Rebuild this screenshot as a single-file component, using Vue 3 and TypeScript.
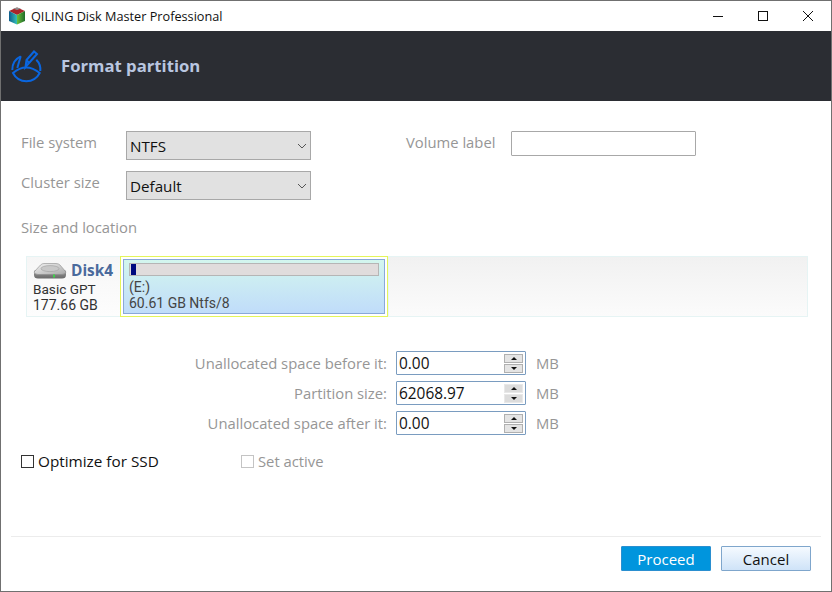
<script setup lang="ts">
interface SpinRow { label: string; value: string; active: boolean }
const spins: SpinRow[] = [
  { label: 'Unallocated space before it:', value: '0.00', active: false },
  { label: 'Partition size:', value: '62068.97', active: true },
  { label: 'Unallocated space after it:', value: '0.00', active: false },
]
</script>

<template>
  <div class="win">
    <div class="titlebar">
      <svg class="applogo" width="18" height="18" viewBox="0 0 18 18">
        <defs>
          <linearGradient id="logoL" x1="0" y1="0" x2="1" y2="0">
            <stop offset="0" stop-color="#0f5c8c" />
            <stop offset="1" stop-color="#35c0b8" />
          </linearGradient>
          <linearGradient id="logoR" x1="0" y1="0" x2="1" y2="0">
            <stop offset="0" stop-color="#6bbf3a" />
            <stop offset="1" stop-color="#1f6b2a" />
          </linearGradient>
        </defs>
        <path d="M9 0.5 17 4 9 8 1 4Z" fill="#a9252a" />
        <path d="M5 1.5 9 0.5 13 1.5 9 3Z" fill="#8f8f8f" />
        <path d="M1 4 9 8V17.5L1 14Z" fill="url(#logoL)" />
        <path d="M9 8 17 4V14L9 17.5Z" fill="url(#logoR)" />
      </svg>
      <span class="apptitle">QILING Disk Master Professional</span>
      <div class="winbtns">
        <svg width="12" height="12" viewBox="0 0 12 12"><path d="M1 6.5H11" stroke="#111" fill="none" /></svg>
        <svg width="12" height="12" viewBox="0 0 12 12"><rect x="1.5" y="1.5" width="9" height="9" stroke="#111" fill="none" /></svg>
        <svg width="12" height="12" viewBox="0 0 12 12"><path d="M1 1 11 11M11 1 1 11" stroke="#111" fill="none" /></svg>
      </div>
    </div>

    <header class="head">
      <svg class="headicon" width="36" height="36" viewBox="0 0 36 36" fill="none" stroke="#0a66e0" stroke-width="2">
        <path d="M12.7 8.3A14 14 0 0 0 4.3 22" />
        <path d="M12.7 8.3 9.3 20" />
        <path d="M28.3 11.7A14 14 0 0 1 32.3 23" />
        <path d="M5 25Q18 14 31.7 25A15 15 0 0 1 5 25Z" />
        <path d="M17.5 19 18.5 12 26 3.5 29 6 21 15Z" />
        <path d="M18.5 12 21 15" />
      </svg>
      <h1 class="headtitle">Format partition</h1>
    </header>

    <main class="body">
      <section class="formtop">
        <div class="fieldcol">
          <div class="field">
            <label class="lbl lblfixed">File system</label>
            <div class="select"><span>NTFS</span><svg width="10" height="6" viewBox="0 0 10 6"><path d="M1 1 5 5 9 1" stroke="#555" fill="none" /></svg></div>
          </div>
          <div class="field">
            <label class="lbl lblfixed">Cluster size</label>
            <div class="select"><span>Default</span><svg width="10" height="6" viewBox="0 0 10 6"><path d="M1 1 5 5 9 1" stroke="#555" fill="none" /></svg></div>
          </div>
        </div>
        <div class="volume">
          <label class="lbl vollbl">Volume label</label>
          <div class="volinput"></div>
        </div>
      </section>

      <div class="lbl sizeloc">Size and location</div>

      <section class="strip">
        <div class="diskcard">
          <div class="diskname">
            <svg width="34" height="18" viewBox="0 0 34 18">
              <defs>
                <linearGradient id="hddtop" x1="0" y1="0" x2="1" y2="1">
                  <stop offset="0" stop-color="#f4f4f4" />
                  <stop offset="1" stop-color="#a8a8a8" />
                </linearGradient>
                <linearGradient id="hddside" x1="0" y1="0" x2="0" y2="1">
                  <stop offset="0" stop-color="#9a9a9a" />
                  <stop offset="1" stop-color="#6a6a6a" />
                </linearGradient>
              </defs>
              <path d="M1 9.5Q1 8 3 8H31Q33 8 33 9.5V13Q33 16.5 29 16.5H5Q1 16.5 1 13Z" fill="url(#hddside)" />
              <path d="M1 10Q1 12 5 12.5H29Q33 12 33 10L27 3Q25.5 1.5 23 1.5H11Q9 1.5 7.5 3Z" fill="url(#hddtop)" stroke="#8c8c8c" stroke-width=".6" />
              <ellipse cx="17" cy="6.6" rx="9" ry="3" fill="#c8c8c8" stroke="#9e9e9e" stroke-width=".6" />
              <rect x="20" y="12.5" width="2" height="3" fill="#3fcf4a" />
            </svg>
            <span class="diskword">Disk4</span>
          </div>
          <div class="diskinfo">Basic GPT</div>
          <div class="diskinfo wide">177.66 GB</div>
        </div>
        <div class="partouter">
          <div class="partinner">
            <div class="usage"><div class="usagefill"></div></div>
            <div class="partname">(E:)</div>
            <div class="partname">60.61 GB Ntfs/8</div>
          </div>
        </div>
        <div class="unalloc"></div>
      </section>

      <section class="spingroup">
        <div v-for="row in spins" :key="row.label" class="spinrow">
          <label class="lbl spinlbl">{{ row.label }}</label>
          <div class="spinbox">
            <span class="spinval">{{ row.value }}</span>
            <div class="spinbtns" :class="{ on: row.active }">
              <div class="spinbtn"><i class="up"></i></div>
              <div class="spinbtn"><i class="down"></i></div>
            </div>
          </div>
          <span class="lbl unit">MB</span>
        </div>
      </section>

      <section class="checks">
        <label class="check"><span class="box"></span>Optimize for SSD</label>
        <label class="check off"><span class="box"></span><span class="setactive">Set active</span></label>
      </section>
    </main>

    <footer class="foot">
      <button class="btn primary">Proceed</button>
      <button class="btn secondary">Cancel</button>
    </footer>
  </div>
</template>

<style>
html, body { margin: 0; padding: 0; background: #fff; }
</style>

<style scoped>
.win {
  width: 832px;
  height: 592px;
  box-sizing: border-box;
  border: 1px solid #707070;
  background: #fff;
  display: flex;
  flex-direction: column;
  font-family: "Open Sans", "Noto Sans", sans-serif;
  font-size: 15px;
  color: #1a1a1a;
  overflow: hidden;
}
.titlebar { height: 30px; display: flex; align-items: center; padding-left: 7px; flex: none; }
.applogo { flex: none; }
.apptitle { margin-left: 5px; font-size: 12.7px; color: #111; }
.winbtns { margin-left: auto; display: flex; gap: 33px; margin-right: 17px; align-items: center; }
.winbtns svg { display: block; }
.head { height: 70px; background: #2b2d33; display: flex; align-items: center; padding-left: 7px; flex: none; }
.headicon { flex: none; }
.headtitle { margin: -2px 0 0 17px; font-size: 16.7px; font-weight: 700; color: #b9c6e0; }
.body { flex: 1; padding: 30px 0 0 20px; position: relative; }
.formtop { display: flex; height: 69px; }
.fieldcol { display: flex; flex-direction: column; gap: 11px; }
.field { display: flex; align-items: flex-start; }
.lbl { color: #969696; font-size: 14.8px; line-height: 20px; }
.lblfixed { width: 105px; margin-top: 1px; }
.select {
  width: 185px; height: 29px; box-sizing: border-box; border: 1px solid #a8a8a8; background: #e1e1e1;
  display: flex; align-items: center; justify-content: space-between; padding: 0 3px 0 3px; color: #111; font-size: 15.2px;
}
.volume { display: flex; align-items: flex-start; margin-left: 95px; }
.vollbl { width: 105px; margin-top: 1px; }
.volinput { width: 185px; height: 25px; box-sizing: border-box; border: 1px solid #a8a8a8; border-radius: 1px; }
.sizeloc { margin-top: 17px; }
.strip { margin: 19px 0 0 5px; width: 782px; height: 61px; display: flex; }
.diskcard {
  width: 94px; flex: none; box-sizing: border-box; padding: 3px 0 0 6px; background: linear-gradient(#f6f6f6, #fdfdfd);
  border: 1px solid #e6f4f4; border-right: 0;
}
.diskname { display: flex; align-items: center; height: 21px; }
.diskword { margin-left: 4px; font-weight: 700; font-size: 15.4px; color: #4a6a9c; }
.diskinfo { font-family: Roboto, sans-serif; font-size: 13.6px; line-height: 16px; color: #333; }
.diskinfo.wide { font-size: 14px; }
.partouter { width: 268px; flex: none; box-sizing: border-box; border: 1px solid #e4f55a; padding: 2px; }
.partinner {
  height: 100%; box-sizing: border-box; border: 1px solid #8aa8d8;
  background: linear-gradient(#d3f6ee, #c0dcfa); padding: 3px 5px 0 5px;
}
.usage { height: 13px; box-sizing: border-box; border: 1px solid #b5b5b5; background: #e0dcdc; }
.usagefill { width: 5px; height: 100%; background: #000a80; margin-left: 1px; }
.partname { font-family: Roboto, sans-serif; font-size: 14px; line-height: 16px; color: #444; }
.usage + .partname { margin-top: 3px; }
.unalloc { flex: 1; background: linear-gradient(#f1f1f1, #fbfbfb); border: 1px solid #e6f4f4; }
.spingroup { margin-top: 34px; display: flex; flex-direction: column; gap: 6px; }
.spinrow { display: flex; align-items: center; height: 24px; }
.spinlbl { width: 366px; text-align: right; white-space: nowrap; }
.spinbox {
  margin-left: 9px; width: 130px; height: 24px; box-sizing: border-box; border: 1px solid #7a9cc0; border-radius: 1px;
  display: flex; align-items: center; justify-content: space-between;
}
.spinval { margin: 1px 0 0 2px; font-size: 15.4px; color: #111; }
.spinbtns { width: 19px; margin-right: 2px; display: flex; flex-direction: column; gap: 1px; }
.spinbtn { height: 9px; background: #e4e4e4; border: 1px solid #b0b0b0; box-sizing: border-box; display: flex; align-items: center; justify-content: center; }
.spinbtns.on .spinbtn { border-color: #e8e8e8; background: #dcdcdc; }
.up { width: 0; height: 0; border: 3px solid transparent; border-top: 0; border-bottom: 3px solid #111; }
.down { width: 0; height: 0; border: 3px solid transparent; border-bottom: 0; border-top: 3px solid #111; }
.unit { margin-left: 10px; }
.checks { margin-top: 16px; display: flex; }
.check { display: flex; align-items: center; width: 220px; font-size: 15.3px; color: #111; line-height: 20px; white-space: nowrap; }
.box { width: 13px; height: 13px; box-sizing: border-box; border: 1px solid #333; margin-right: 4px; flex: none; }
.check.off { color: #969696; font-size: 14.8px; }
.check.off .box { border-color: #c4c4c4; }
.foot {
  flex: none; margin: 0 10px; height: 55px; box-sizing: border-box; border-top: 1px solid #ececec;
  display: flex; justify-content: flex-end; align-items: flex-start; gap: 10px; padding: 9px 10px 0 0;
}
.btn { width: 90px; height: 25px; box-sizing: border-box; font-family: inherit; font-size: 15px; padding: 0; border-radius: 1px; }
.primary { background: #0095dd; border: 1px solid #2a8fd0; color: #fff; }
.secondary { background: linear-gradient(#f5faff, #cfe3f8); border: 1px solid #7fa6cc; color: #111; }
</style>
